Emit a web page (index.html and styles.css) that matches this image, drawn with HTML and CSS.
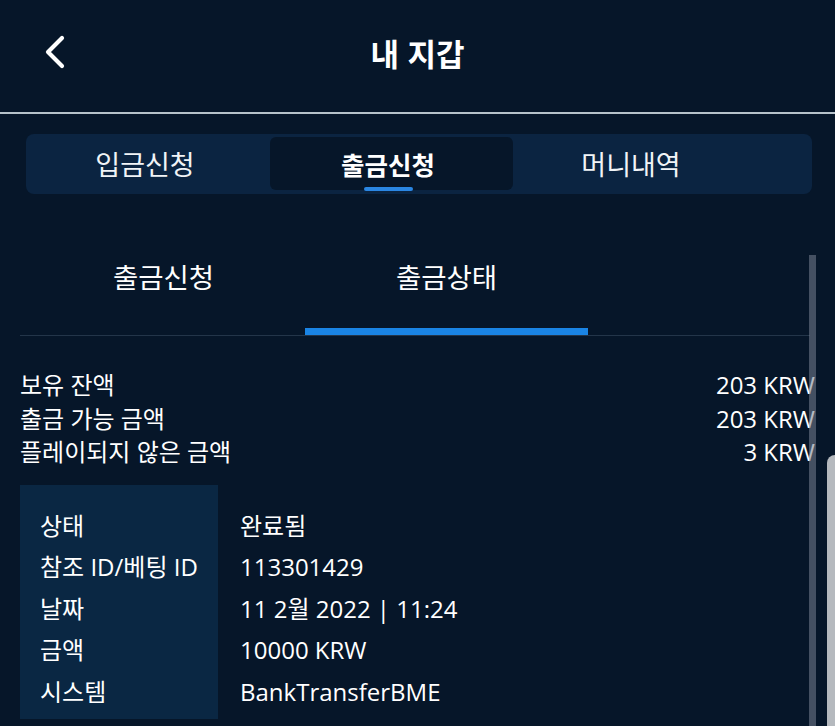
FILE: index.html
```html
<!DOCTYPE html>
<html lang="ko">
<head>
    <meta charset="UTF-8">
    <meta name="viewport" content="width=device-width, initial-scale=1.0">
    <title>내 지갑</title>
    <link rel="stylesheet" href="styles.css">
</head>
<body>
    <!-- Top bar -->
    <header class="topbar">
        <a class="back" href="#">
            <svg width="22" height="34" viewBox="0 0 22 34"><polyline points="18,3 4,17 18,31" fill="none" stroke="#fff" stroke-width="4.2" stroke-linecap="round" stroke-linejoin="round"/></svg>
        </a>
        <h1>내 지갑</h1>
    </header>

    <!-- Wallet sections -->
    <nav class="segments">
        <div class="seg">입금신청</div>
        <div class="seg active">출금신청<span class="dot"></span></div>
        <div class="seg">머니내역</div>
    </nav>

    <div class="subtabs">
        <div class="subtab">출금신청</div>
        <div class="subtab active">출금상태</div>
    </div>

    <div class="balances">
        <div class="row"><span>보유 잔액</span><span>203 KRW</span></div>
        <div class="row"><span>출금 가능 금액</span><span>203 KRW</span></div>
        <div class="row"><span>플레이되지 않은 금액</span><span>3 KRW</span></div>
    </div>

    <div class="details">
        <ul class="labels">
            <li>상태</li>
            <li>참조 ID/베팅 ID</li>
            <li>날짜</li>
            <li>금액</li>
            <li>시스템</li>
        </ul>
        <ul class="values">
            <li>완료됨</li>
            <li>113301429</li>
            <li>11 2월 2022 | 11:24</li>
            <li>10000 KRW</li>
            <li>BankTransferBME</li>
        </ul>
    </div>

    <div class="scrollbar"></div>
    <div class="side-sheet"></div>
</body>
</html>
```

FILE: styles.css
```css
body { margin: 0; background: #061629; color: #fff; font-family: "Open Sans", "Noto Sans CJK KR", sans-serif; height: 726px; overflow: hidden; position: relative; }
ul { list-style: none; margin: 0; padding: 0; }

.topbar { height: 112px; border-bottom: 2px solid #b6c2ca; display: flex; align-items: center; justify-content: center; position: relative; }
.topbar h1 { margin: 0; font-size: 31px; font-weight: 700; font-family: "Noto Sans CJK KR", sans-serif; margin-top: -8px; }
.back { position: absolute; left: 44px; top: 35px; display: block; }

.segments { margin: 20px 23px 0 26px; height: 60px; box-sizing: border-box; padding: 3px 0 4px 1px; background: #0b2441; border-radius: 8px; display: flex; }
.seg { width: 243px; box-sizing: border-box; padding-right: 7px; display: flex; align-items: center; justify-content: center; font-size: 27px; font-family: "Noto Sans CJK KR", sans-serif; font-weight: 400; color: #f1f4f7; border-radius: 6px; position: relative; }
.seg.active { background: #061629; font-size: 25.5px; font-weight: 700; color: #fff; }
.dot { position: absolute; bottom: -1px; left: 50%; width: 49px; height: 4px; margin-left: -28px; border-radius: 2px; background: #2a86e2; }

.subtabs { margin: 26px 25px 0 20px; padding-left: 2px; display: flex; border-bottom: 1px solid #233549; }
.subtab { width: 283px; height: 115px; box-sizing: border-box; padding-top: 38px; line-height: 36px; text-align: center; font-size: 27.5px; font-family: "Noto Sans CJK KR", sans-serif; border-bottom: 7px solid transparent; }
.subtab.active { border-bottom-color: #1a84e4; }

.balances { margin: 32px 20px 0 20px; font-size: 24px; }
.row { display: flex; justify-content: space-between; line-height: 33.5px; }

.details { margin: 16px 20px 0 20px; display: flex; font-size: 24px; }
.labels { width: 198px; box-sizing: border-box; padding: 20px 0 7px 20px; background: #0a2743; }
.values { padding: 20px 0 0 22px; }
.details li { line-height: 41.5px; }

.scrollbar { position: absolute; left: 809px; top: 255px; width: 7px; bottom: 0; background: rgba(120, 130, 145, 0.55); }
.side-sheet { position: absolute; left: 827px; top: 455px; right: 0; bottom: 0; background: #b5b9be; border-top-left-radius: 10px; }
```
